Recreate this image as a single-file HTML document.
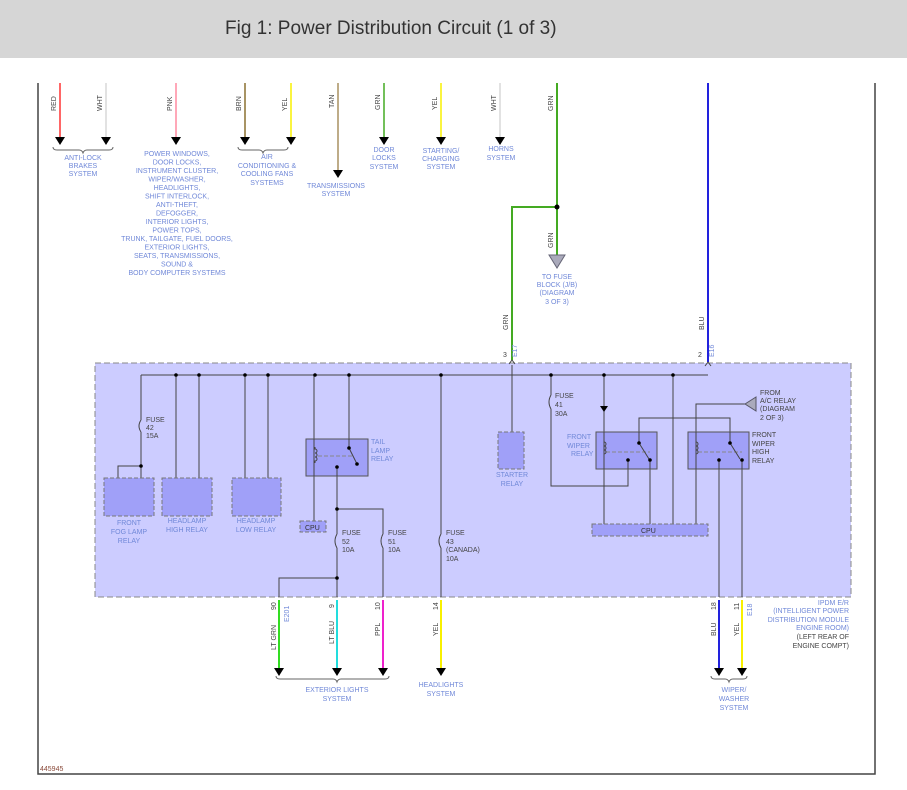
<!DOCTYPE html>
<html><head><meta charset="utf-8"><style>
html,body{margin:0;padding:0;background:#fff;width:907px;height:790px;overflow:hidden}
#hdr{position:absolute;left:0;top:0;width:907px;height:58px;background:#d6d6d6}
#hdr span{position:absolute;left:225px;top:18px;font:19px "Liberation Sans",sans-serif;color:#333}
svg{position:absolute;left:0;top:0}
text{font-family:"Liberation Sans",sans-serif;font-size:7px}
.b{fill:#7088d8}
.k{fill:#444}
.w{font-size:7px;fill:#444}
</style></head><body>
<div id="hdr"><span>Fig 1: Power Distribution Circuit (1 of 3)</span></div>
<svg width="907" height="790" viewBox="0 0 907 790">
<path d="M38 83V774H875V83" fill="none" stroke="#444" stroke-width="1.5"/>
<rect x="95" y="363" width="756" height="234" fill="#ccccff" stroke="#888" stroke-dasharray="6 3"/>
<g stroke-width="1.5" fill="none">
<path d="M60 83V137" stroke="#ff3333"/>
<path d="M106 83V137" stroke="#d8d8d8"/>
<path d="M176 83V137" stroke="#ff8aa0"/>
<path d="M245 83V137" stroke="#8b7030"/>
<path d="M291 83V137" stroke="#f8f000"/>
<path d="M338 83V170" stroke="#a89060"/>
<path d="M384 83V137" stroke="#44aa22"/>
<path d="M441 83V137" stroke="#f8f000"/>
<path d="M500 83V137" stroke="#d8d8d8"/>
<path d="M557 83V255M557 207H512V360" stroke="#44aa22" stroke-width="2"/>
<path d="M708 83V362" stroke="#2222dd" stroke-width="2"/>
</g>
<g fill="#000">
<path d="M55 137h10l-5 8z"/><path d="M101 137h10l-5 8z"/><path d="M171 137h10l-5 8z"/><path d="M240 137h10l-5 8z"/><path d="M286 137h10l-5 8z"/><path d="M333 170h10l-5 8z"/><path d="M379 137h10l-5 8z"/><path d="M436 137h10l-5 8z"/><path d="M495 137h10l-5 8z"/>
<circle cx="557" cy="207" r="2.5"/>
</g>
<path d="M549 255h16l-8 13z" fill="#aab" stroke="#667"/>
<g class="w">
<text transform="translate(56,111) rotate(-90)">RED</text>
<text transform="translate(102,111) rotate(-90)">WHT</text>
<text transform="translate(172,111) rotate(-90)">PNK</text>
<text transform="translate(241,111) rotate(-90)">BRN</text>
<text transform="translate(287,111) rotate(-90)">YEL</text>
<text transform="translate(334,108) rotate(-90)">TAN</text>
<text transform="translate(380,110) rotate(-90)">GRN</text>
<text transform="translate(437,110) rotate(-90)">YEL</text>
<text transform="translate(496,111) rotate(-90)">WHT</text>
<text transform="translate(553,111) rotate(-90)">GRN</text>
<text transform="translate(553,248) rotate(-90)">GRN</text>
<text transform="translate(508,330) rotate(-90)">GRN</text>
<text transform="translate(704,330) rotate(-90)">BLU</text>
<text x="503" y="357">3</text><text x="698" y="357">2</text>
</g>
<g stroke="#666" fill="none" stroke-width="1">
<path d="M53 147q0 3 4 3h22q3 0 4 3q1-3 4-3h22q4 0 4-3"/>
<path d="M238 147q0 3 4 3h17q3 0 4 3q1-3 4-3h17q4 0 4-3"/>
<path d="M276 676q0 3 4 3h53q3 0 4 3q1-3 4-3h44q4 0 4-3"/>
<path d="M711 676q0 3 4 3h10q3 0 4 3q1-3 4-3h10q4 0 4-3"/>
</g>
<g class="b" text-anchor="middle">
<text x="83" y="160">ANTI-LOCK</text><text x="83" y="168">BRAKES</text><text x="83" y="176">SYSTEM</text>
<text x="177" y="156">POWER WINDOWS,</text><text x="177" y="164.5">DOOR LOCKS,</text><text x="177" y="173">INSTRUMENT CLUSTER,</text><text x="177" y="181.5">WIPER/WASHER,</text><text x="177" y="190">HEADLIGHTS,</text><text x="177" y="198.5">SHIFT INTERLOCK,</text><text x="177" y="207">ANTI-THEFT,</text><text x="177" y="215.5">DEFOGGER,</text><text x="177" y="224">INTERIOR LIGHTS,</text><text x="177" y="232.5">POWER TOPS,</text><text x="177" y="241">TRUNK, TAILGATE, FUEL DOORS,</text><text x="177" y="249.5">EXTERIOR LIGHTS,</text><text x="177" y="258">SEATS, TRANSMISSIONS,</text><text x="177" y="266.5">SOUND &amp;</text><text x="177" y="275">BODY COMPUTER SYSTEMS</text>
<text x="267" y="159">AIR</text><text x="267" y="168">CONDITIONING &amp;</text><text x="267" y="176">COOLING FANS</text><text x="267" y="185">SYSTEMS</text>
<text x="336" y="188">TRANSMISSIONS</text><text x="336" y="196">SYSTEM</text>
<text x="384" y="152">DOOR</text><text x="384" y="160">LOCKS</text><text x="384" y="169">SYSTEM</text>
<text x="441" y="153">STARTING/</text><text x="441" y="161">CHARGING</text><text x="441" y="169">SYSTEM</text>
<text x="501" y="151">HORNS</text><text x="501" y="160">SYSTEM</text>
<text x="557" y="279">TO FUSE</text><text x="557" y="287">BLOCK (J/B)</text><text x="557" y="295">(DIAGRAM</text><text x="557" y="304">3 OF 3)</text>
<text x="129" y="525">FRONT</text><text x="129" y="534">FOG LAMP</text><text x="129" y="543">RELAY</text>
<text x="187" y="523">HEADLAMP</text><text x="187" y="532">HIGH RELAY</text>
<text x="256" y="523">HEADLAMP</text><text x="256" y="532">LOW RELAY</text>
<text x="512" y="477">STARTER</text><text x="512" y="486">RELAY</text>
<text x="337" y="692">EXTERIOR LIGHTS</text><text x="337" y="701">SYSTEM</text>
<text x="441" y="687">HEADLIGHTS</text><text x="441" y="696">SYSTEM</text>
<text x="734" y="692">WIPER/</text><text x="734" y="701">WASHER</text><text x="734" y="710">SYSTEM</text>
</g>
<g class="b">
<text x="371" y="444">TAIL</text><text x="371" y="453">LAMP</text><text x="371" y="461">RELAY</text>
<text x="567" y="439">FRONT</text><text x="567" y="448">WIPER</text><text x="571" y="456">RELAY</text>
</g>
<g class="k">
<text x="752" y="437">FRONT</text><text x="752" y="446">WIPER</text><text x="752" y="454">HIGH</text><text x="752" y="463">RELAY</text>
<text x="760" y="395">FROM</text><text x="760" y="403">A/C RELAY</text><text x="760" y="411">(DIAGRAM</text><text x="760" y="420">2 OF 3)</text>
<text x="146" y="422">FUSE</text><text x="146" y="430">42</text><text x="146" y="438">15A</text>
<text x="342" y="535">FUSE</text><text x="342" y="544">52</text><text x="342" y="552">10A</text>
<text x="388" y="535">FUSE</text><text x="388" y="544">51</text><text x="388" y="552">10A</text>
<text x="446" y="535">FUSE</text><text x="446" y="544">43</text><text x="446" y="552">(CANADA)</text><text x="446" y="561">10A</text>
<text x="555" y="398">FUSE</text><text x="555" y="407">41</text><text x="555" y="416">30A</text>
<text x="40" y="771" fill="#8a4a3a">445945</text>
</g>
<g class="b" text-anchor="end">
<text x="849" y="605">IPDM E/R</text><text x="849" y="613">(INTELLIGENT POWER</text><text x="849" y="622">DISTRIBUTION MODULE</text><text x="849" y="630">ENGINE ROOM)</text>
</g>
<g class="k" text-anchor="end"><text x="849" y="639">(LEFT REAR OF</text><text x="849" y="648">ENGINE COMPT)</text></g>
<g stroke="#444" stroke-width="1" fill="none">
<path d="M141 375H708"/>
<path d="M141 375V420M141 432V478M141 466H118V478"/>
<path d="M176 375V478M199 375V478M245 375V478M268 375V478"/>
<path d="M314 375V521"/>
<path d="M349 375V448"/>
<path d="M337 467V534M337 548V597M337 509H383V534M383 548V597M337 578H279V597"/>
<path d="M441 375V534M441 548V597"/>
<path d="M512 365V432"/>
<path d="M551 375V395M551 409V486H628V460"/>
<path d="M604 375V525"/>
<path d="M673 375V525"/>
<path d="M639 442V418H730V442"/>
<path d="M650 460V525"/>
<path d="M696 525V404H745"/>
<path d="M719 460V597M742 460V597"/>
<path d="M141 420q-4 6 0 12M337 534q-4 7 0 14M383 534q-4 7 0 14M441 534q-4 7 0 14M551 395q-4 7 0 14"/>
<path d="M512 360l-3 4M512 360l3 4M708 362l-3 4M708 362l3 4"/>
</g>
<g fill="#000">
<circle cx="176" cy="375" r="1.8"/><circle cx="199" cy="375" r="1.8"/><circle cx="245" cy="375" r="1.8"/><circle cx="268" cy="375" r="1.8"/><circle cx="315" cy="375" r="1.8"/><circle cx="349" cy="375" r="1.8"/><circle cx="441" cy="375" r="1.8"/><circle cx="551" cy="375" r="1.8"/><circle cx="604" cy="375" r="1.8"/><circle cx="673" cy="375" r="1.8"/>
<circle cx="141" cy="466" r="1.8"/><circle cx="337" cy="509" r="1.8"/><circle cx="337" cy="578" r="1.8"/>
<path d="M600 406h8l-4 6z"/>
</g>
<g fill="#a0a0f8" stroke="#777" stroke-dasharray="4 2">
<rect x="104" y="478" width="50" height="38"/>
<rect x="162" y="478" width="50" height="38"/>
<rect x="232" y="478" width="49" height="38"/>
<rect x="300" y="521" width="26" height="11"/>
<rect x="498" y="432" width="26" height="37"/>
<rect x="592" y="524" width="116" height="12"/>
</g>
<g fill="#a0a0f8" stroke="#555">
<rect x="306" y="439" width="62" height="37"/>
<rect x="596" y="432" width="61" height="37"/>
<rect x="688" y="432" width="61" height="37"/>
</g>
<g stroke="#888" stroke-dasharray="4 2" stroke-width="1">
<path d="M318 456H352M606 452H650M698 452H742"/>
</g>
<g stroke="#444" fill="none"><path d="M315 447v2a2 2 0 010 4a2 2 0 010 4a2 2 0 010 4v2M604 440v2a2 2 0 010 4a2 2 0 010 4a2 2 0 010 4v2M696 440v2a2 2 0 010 4a2 2 0 010 4a2 2 0 010 4v2M349 448l8 16M639 443l10 16M730 443l10 16M314 439V476M349 439V448M337 467V476M604 432V469M650 460V469M639 432V443M628 460V469M730 432V443M696 432V469M719 460V469M742 460V469"/></g>
<g fill="#000"><circle cx="349" cy="448" r="1.8"/><circle cx="357" cy="464" r="1.8"/><circle cx="337" cy="467" r="1.8"/><circle cx="639" cy="443" r="1.8"/><circle cx="650" cy="460" r="1.8"/><circle cx="628" cy="460" r="1.8"/><circle cx="730" cy="443" r="1.8"/><circle cx="742" cy="460" r="1.8"/><circle cx="719" cy="460" r="1.8"/></g>
<path d="M745 404l11-7v14z" fill="#aab" stroke="#556"/>
<g fill="#333"><text x="305" y="530">CPU</text><text x="641" y="533">CPU</text></g>
<g stroke-width="2" fill="none">
<path d="M279 600V668" stroke="#33dd22"/>
<path d="M337 600V668" stroke="#22dddd"/>
<path d="M383 600V668" stroke="#ee22cc"/>
<path d="M441 600V668" stroke="#f8f000"/>
<path d="M719 600V668" stroke="#2222dd"/>
<path d="M742 600V668" stroke="#f8f000"/>
</g>
<g fill="#000">
<path d="M274 668h10l-5 8z"/><path d="M332 668h10l-5 8z"/><path d="M378 668h10l-5 8z"/><path d="M436 668h10l-5 8z"/><path d="M714 668h10l-5 8z"/><path d="M737 668h10l-5 8z"/>
</g>
<g class="w">
<text transform="translate(276,650) rotate(-90)">LT GRN</text>
<text transform="translate(334,644) rotate(-90)">LT BLU</text>
<text transform="translate(380,636) rotate(-90)">PPL</text>
<text transform="translate(438,636) rotate(-90)">YEL</text>
<text transform="translate(716,636) rotate(-90)">BLU</text>
<text transform="translate(739,636) rotate(-90)">YEL</text>
<text transform="translate(276,610) rotate(-90)">90</text>
<text transform="translate(334,608) rotate(-90)">9</text>
<text transform="translate(380,610) rotate(-90)">10</text>
<text transform="translate(438,610) rotate(-90)">14</text>
<text transform="translate(716,610) rotate(-90)">18</text>
<text transform="translate(739,610) rotate(-90)">11</text>
</g>
<g class="b">
<text transform="translate(289,622) rotate(-90)">E201</text>
<text transform="translate(517,357) rotate(-90)">E17</text>
<text transform="translate(714,357) rotate(-90)">E16</text>
<text transform="translate(752,616) rotate(-90)">E18</text>
</g>
</svg>
</body></html>
